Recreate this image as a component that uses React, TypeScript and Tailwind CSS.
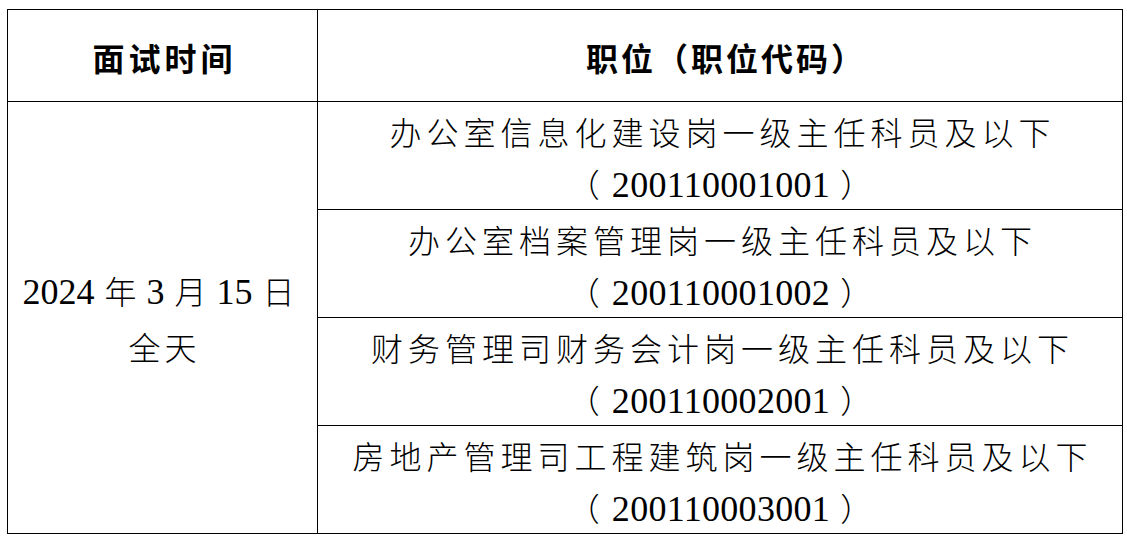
import React from "react";

const rows = [
  { title: "办公室信息化建设岗一级主任科员及以下", code: "200110001001" },
  { title: "办公室档案管理岗一级主任科员及以下", code: "200110001002" },
  { title: "财务管理司财务会计岗一级主任科员及以下", code: "200110002001" },
  { title: "房地产管理司工程建筑岗一级主任科员及以下", code: "200110003001" },
];

function Code({ code }: { code: string }) {
  return (
    <div className="h-[44px] leading-[44px] text-[32px] text-black whitespace-nowrap">
      <span className="inline-block mr-[12px] font-['Noto_Sans_CJK_SC',sans-serif] font-light">（</span>
      <span className="font-['Liberation_Serif',serif] text-[36px] tracking-[0.3px]">{code}</span>
      <span className="inline-block ml-[10px] font-['Noto_Sans_CJK_SC',sans-serif] font-light">）</span>
    </div>
  );
}

export default function App() {
  return (
    <div className="w-[1127px] h-[539px] bg-white pl-[7px] pt-[9px]">
      <table className="border-collapse w-[1116px] table-fixed text-black">
        <colgroup>
          <col className="w-[310px]" />
          <col />
        </colgroup>
        <tbody>
          <tr>
            <td className="border border-black text-center align-top p-0">
              <div className="h-[91px] flex items-center justify-center pt-[2px]">
                <span className="text-[32px] font-bold tracking-[4px] pl-[4px] font-['Noto_Sans_CJK_SC',sans-serif]">面试时间</span>
              </div>
            </td>
            <td className="border border-black text-center align-top p-0">
              <div className="h-[91px] flex items-center justify-center pt-[2px]">
                <span className="text-[32px] font-bold tracking-[3px] pl-[12px] font-['Noto_Sans_CJK_SC',sans-serif]">
                  职位（职位代码<span className="inline-block">）</span>
                </span>
              </div>
            </td>
          </tr>
          {rows.map((r, i) => (
            <tr key={i}>
              {i === 0 && (
                <td rowSpan={4} className="border border-black text-center align-middle p-0">
                  <div className="leading-[54px] text-[32px] whitespace-nowrap pr-[8px] font-['Noto_Sans_CJK_SC',sans-serif] font-light">
                    <span className="font-['Liberation_Serif',serif] text-[36px] font-normal">2024</span>
                    <span className="inline-block mx-[10px]">年</span>
                    <span className="font-['Liberation_Serif',serif] text-[36px] font-normal">3</span>
                    <span className="inline-block mx-[10px]">月</span>
                    <span className="font-['Liberation_Serif',serif] text-[36px] font-normal">15</span>
                    <span className="inline-block ml-[10px]">日</span>
                  </div>
                  <div className="leading-[54px] text-[32px] tracking-[4px] pl-[4px] font-['Noto_Sans_CJK_SC',sans-serif] font-light">全天</div>
                </td>
              )}
              <td className="border border-black text-center align-top p-0">
                <div className="h-[107px] pt-[7px] flex flex-col gap-[8px]">
                  <div className="h-[44px] leading-[44px] text-[32px] tracking-[5px] pl-[5px] whitespace-nowrap font-['Noto_Sans_CJK_SC',sans-serif] font-light">
                    {r.title}
                  </div>
                  <Code code={r.code} />
                </div>
              </td>
            </tr>
          ))}
        </tbody>
      </table>
    </div>
  );
}
